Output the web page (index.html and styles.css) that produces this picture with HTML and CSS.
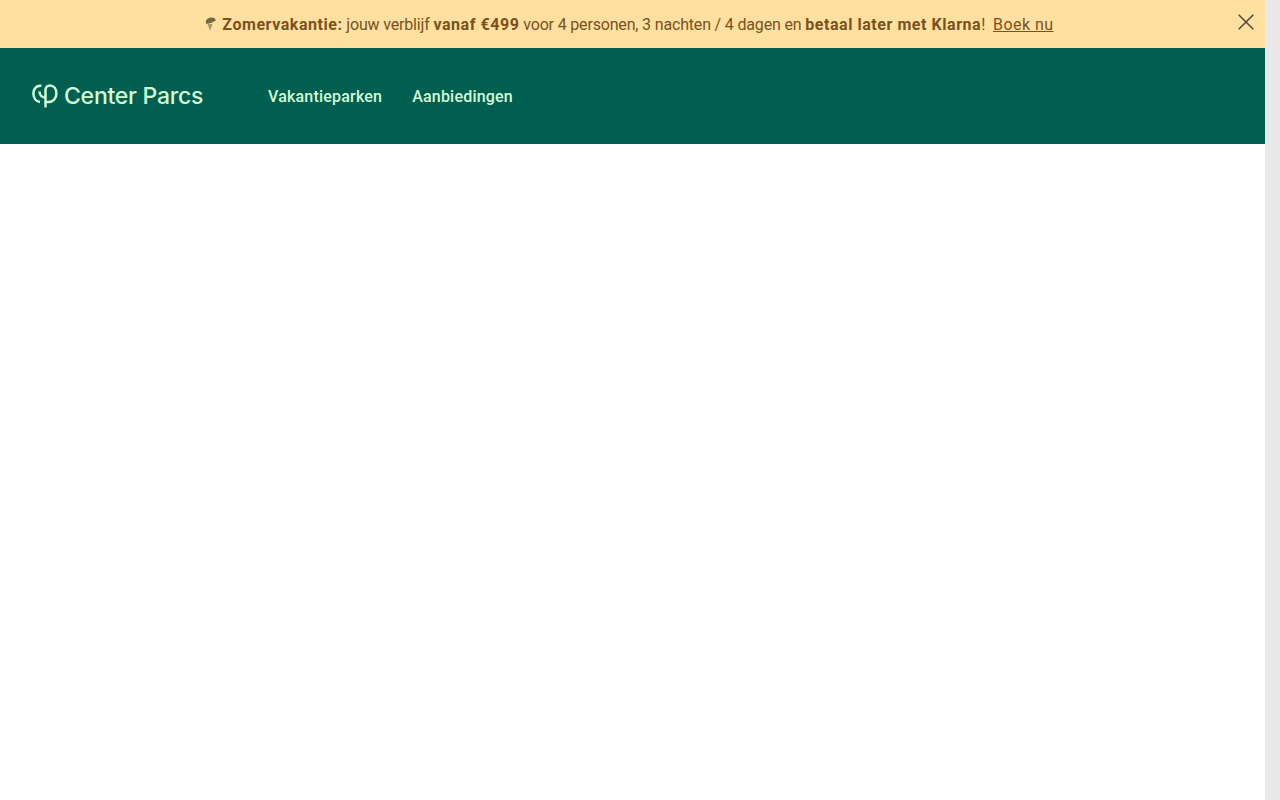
FILE: index.html
```html
<!DOCTYPE html>
<html lang="nl">
<head>
  <meta charset="UTF-8">
  <meta name="viewport" content="width=device-width, initial-scale=1.0">
  <title>Center Parcs</title>
  <link rel="stylesheet" href="styles.css">
</head>
<body>
  <div class="page">
    <div class="promo-bar">
      <p class="promo-text">
        <svg class="promo-icon" width="11" height="14" viewBox="0 0 11 14" aria-hidden="true">
          <path d="M2.5 7 L5 14 L7.5 7 Z" fill="#a8986a"/>
          <path d="M1 6.5 C0 3 3 0.5 6.5 0.5 C9.5 0.5 11 2 10.5 4 C9 3.5 8.5 5.5 7 5.5 C5.5 5.5 4 7.5 1 6.5 Z" fill="#6f6a45"/>
        </svg>
        <b>Zomervakantie:</b> jouw verblijf <b>vanaf €499</b> voor 4 personen, 3 nachten / 4 dagen en <b>betaal later met Klarna</b>!
        <a class="promo-link" href="#">Boek nu</a>
      </p>
      <button class="promo-close" type="button" aria-label="Sluiten">
        <svg width="16" height="16" viewBox="0 0 16 16"><path d="M0.7 0.7 L15.3 15.3 M15.3 0.7 L0.7 15.3" stroke="#4a4a40" stroke-width="1.5" fill="none"/></svg>
      </button>
    </div>

    <header class="site-header">
      <a class="logo" href="#">
        <svg class="logo-mark" width="26" height="24" viewBox="0 0 26 24" aria-hidden="true">
          <g fill="none" stroke="#d3fbd3" stroke-width="2.5">
            <path d="M9.5 1.8 C4.5 1 1.4 4.8 1.4 9.5 C1.4 14.5 4.5 17.5 8 18"/>
            <path d="M7.5 7.5 C7.5 11 10 13.5 13.5 13.5"/>
            <path d="M13.5 23.5 L13.5 6 C13.5 3 15.5 1.4 18 1.4 C22 1.4 24.4 5 24.4 9.5 C24.4 14.5 21 18 16.5 18 L13.5 18"/>
          </g>
        </svg>
        <span class="logo-text">Center Parcs</span>
      </a>
      <nav class="main-nav">
        <a href="#">Vakantieparken</a>
        <a href="#">Aanbiedingen</a>
      </nav>
    </header>

    <main class="content"></main>
  </div>
  <div class="scrollbar"></div>
</body>
</html>
```

FILE: styles.css
```css
* {
  margin: 0;
  padding: 0;
  box-sizing: border-box;
  font-family: 'Roboto', sans-serif;
}

html, body {
  height: 100%;
  overflow: hidden;
}

body {
  display: flex;
  background-color: #fff;
}

.page {
  flex: 1;
  display: flex;
  flex-direction: column;
}

.scrollbar {
  width: 15px;
  background-color: #e8e8e8;
}

.promo-bar {
  position: relative;
  height: 48px;
  display: flex;
  align-items: center;
  justify-content: center;
  background-color: #ffe0a0;
  padding-right: 7px;
}

.promo-text {
  font-size: 16px;
  color: #7a5220;
  letter-spacing: -0.17px;
  white-space: nowrap;
}

.promo-text b {
  font-weight: 700;
  letter-spacing: 0.55px;
}

.promo-icon {
  vertical-align: -1px;
  margin-right: 3px;
}

.promo-link {
  color: #7a5220;
  margin-left: 4px;
  letter-spacing: 0.45px;
}

.promo-close {
  position: absolute;
  top: 14px;
  right: 11px;
  width: 16px;
  height: 16px;
  border: none;
  background: none;
  cursor: pointer;
}

.promo-close svg {
  display: block;
}

.site-header {
  height: 96px;
  display: flex;
  align-items: center;
  padding-left: 32px;
  background-color: #015f51;
}

.logo {
  width: 236px;
  display: flex;
  align-items: center;
  gap: 6px;
  text-decoration: none;
}

.logo-text {
  font-family: 'Inter', sans-serif;
  font-size: 23px;
  font-weight: 500;
  color: #d3fbd3;
  letter-spacing: -0.25px;
}

.main-nav {
  display: flex;
  gap: 30px;
}

.main-nav a {
  font-size: 16px;
  font-weight: 500;
  color: #d3fbd3;
  text-decoration: none;
  letter-spacing: 0.2px;
}

.content {
  flex: 1;
}
```
